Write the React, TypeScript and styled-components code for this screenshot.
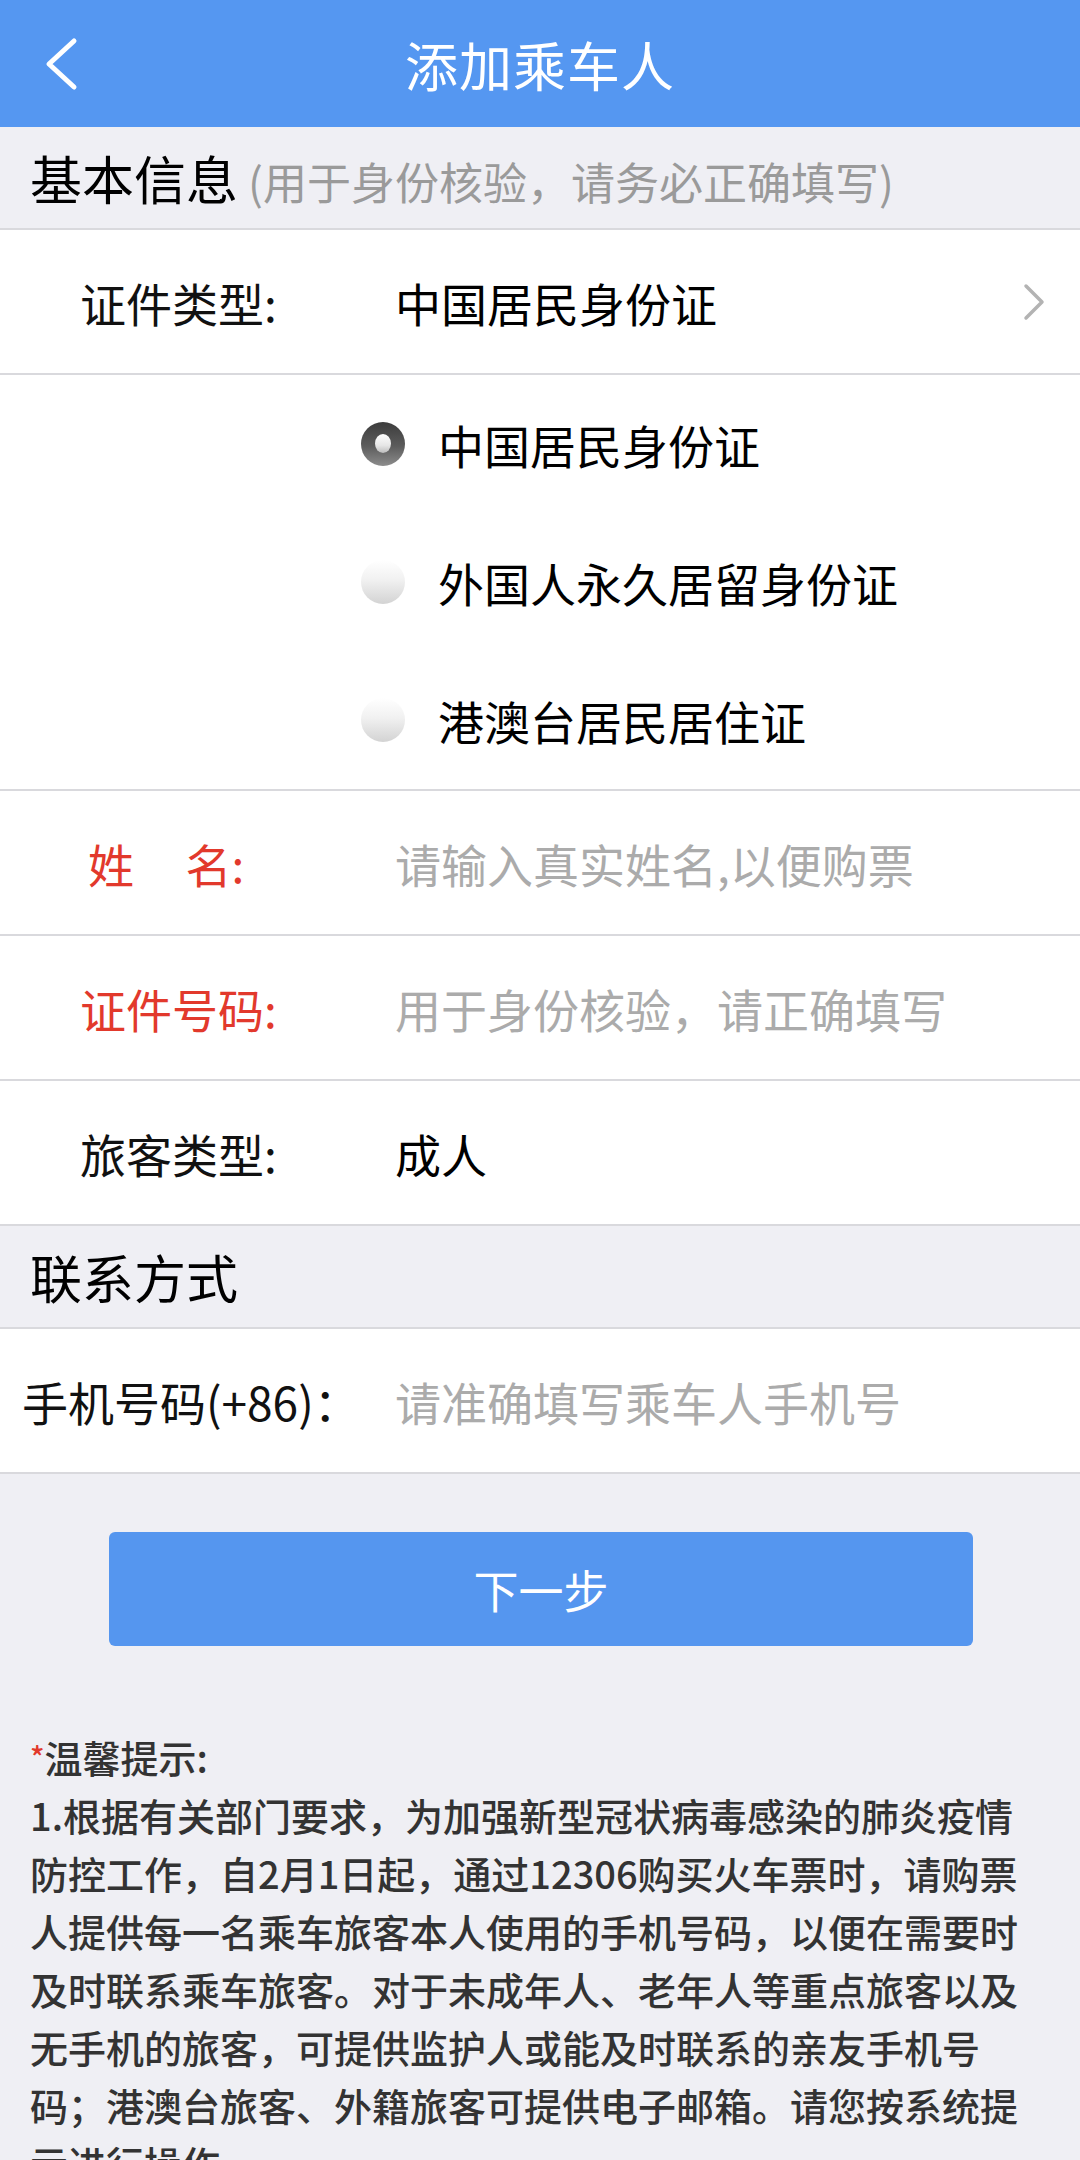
import styled, { createGlobalStyle } from "styled-components";

const GlobalStyle = createGlobalStyle`
  html, body {
    margin: 0;
    padding: 0;
    background: #efeff4;
  }
  body {
    font-family: "Noto Sans CJK SC", "Noto Sans", sans-serif;
  }
  * {
    box-sizing: border-box;
  }
`;

const Page = styled.div`
  width: 1080px;
  min-height: 2160px;
  background: #efeff4;
  color: #000;
`;

const NavBar = styled.header`
  display: grid;
  grid-template-columns: 160px 1fr 160px;
  align-items: center;
  height: 127px;
  background: #5597f1;
`;

const BackButton = styled.button`
  display: flex;
  align-items: center;
  height: 100%;
  padding: 0 0 0 42px;
  border: none;
  background: transparent;
  cursor: pointer;
`;

const Title = styled.h1`
  margin: 0;
  text-align: center;
  font-size: 53px;
  font-weight: 400;
  color: #fff;
  letter-spacing: 1px;
`;

const SectionTitle = styled.div`
  height: 103px;
  padding-left: 30px;
  line-height: 101px;
  font-size: 52px;
  color: #000;
  border-bottom: 2px solid #d9d9dd;
  white-space: nowrap;
`;

const SectionHint = styled.span`
  margin-left: 10px;
  font-size: 44px;
  color: #9a9a9a;
`;

const Row = styled.div`
  display: flex;
  align-items: center;
  height: 145px;
  padding-right: 34px;
  background: #fff;
  border-bottom: 2px solid #d9d9dd;
  font-size: 46px;
`;

const Label = styled.span<{ $inset?: number; $required?: boolean }>`
  flex: none;
  width: 395px;
  padding-left: ${(p) => p.$inset ?? 80}px;
  color: ${(p) => (p.$required ? "#e2392c" : "#111")};
  white-space: pre;
`;

const Value = styled.span`
  flex: 1;
  color: #000;
`;

const Input = styled.input`
  flex: 1;
  min-width: 0;
  padding: 0;
  border: none;
  outline: none;
  background: transparent;
  font: inherit;
  color: #000;

  &::placeholder {
    color: #ababab;
  }
`;

const RadioGroup = styled.div`
  display: flex;
  flex-direction: column;
  background: #fff;
  border-bottom: 2px solid #d9d9dd;
`;

const RadioOption = styled.label`
  display: flex;
  align-items: center;
  gap: 33px;
  height: 138px;
  padding-left: 361px;
  font-size: 46px;
  color: #000;
  cursor: pointer;
`;

const RadioDot = styled.span<{ $checked?: boolean }>`
  position: relative;
  flex: none;
  width: 44px;
  height: 44px;
  border-radius: 50%;
  background: ${(p) =>
    p.$checked
      ? "linear-gradient(180deg, #3c3c3c 0%, #5c5c5c 55%, #8c8c8c 100%)"
      : "linear-gradient(180deg, #ffffff 0%, #f1f1f1 45%, #d3d3d3 100%)"};

  &::after {
    content: "";
    display: ${(p) => (p.$checked ? "block" : "none")};
    position: absolute;
    left: 14px;
    top: 12px;
    width: 16px;
    height: 19px;
    border-radius: 50%;
    background: linear-gradient(180deg, #ffffff 0%, #e6e6e6 60%, #bdbdbd 100%);
  }
`;

const NextButton = styled.button`
  display: block;
  width: 864px;
  height: 114px;
  margin: 58px auto 0 109px;
  border: none;
  border-radius: 6px;
  background: #5596ef;
  color: #fff;
  font-family: inherit;
  font-size: 45px;
  cursor: pointer;
`;

const Tips = styled.div`
  padding: 81px 40px 0 30px;
  font-size: 38px;
  line-height: 58px;
  font-weight: 500;
  color: #333;
`;

const Star = styled.span`
  color: #e2392c;
  font-size: 30px;
  vertical-align: 4px;
`;

const Chevron = () => (
  <svg width="24" height="38" viewBox="0 0 24 38">
    <polyline
      points="4,3 20,19 4,35"
      fill="none"
      stroke="#b3b3b3"
      strokeWidth="3.5"
      strokeLinecap="round"
      strokeLinejoin="round"
    />
  </svg>
);

const BackIcon = () => (
  <svg width="36" height="54" viewBox="0 0 36 54">
    <polyline
      points="32,4 7,27 32,50"
      fill="none"
      stroke="#fff"
      strokeWidth="5"
      strokeLinecap="round"
      strokeLinejoin="round"
    />
  </svg>
);

const idTypes = ["中国居民身份证", "外国人永久居留身份证", "港澳台居民居住证"];

export default function App() {
  return (
    <Page>
      <GlobalStyle />
      <NavBar>
        <BackButton aria-label="返回">
          <BackIcon />
        </BackButton>
        <Title>添加乘车人</Title>
        <span />
      </NavBar>

      <SectionTitle>
        基本信息<SectionHint>(用于身份核验，请务必正确填写)</SectionHint>
      </SectionTitle>

      <Row>
        <Label>证件类型:</Label>
        <Value>中国居民身份证</Value>
        <Chevron />
      </Row>

      <RadioGroup>
        {idTypes.map((t, i) => (
          <RadioOption key={t}>
            <RadioDot $checked={i === 0} />
            {t}
          </RadioOption>
        ))}
      </RadioGroup>

      <Row>
        <Label $inset={88} $required>{"姓     名:"}</Label>
        <Input placeholder="请输入真实姓名,以便购票" />
      </Row>
      <Row>
        <Label $required>证件号码:</Label>
        <Input placeholder="用于身份核验，请正确填写" />
      </Row>
      <Row>
        <Label>旅客类型:</Label>
        <Value>成人</Value>
      </Row>

      <SectionTitle>联系方式</SectionTitle>

      <Row>
        <Label $inset={22}>手机号码(+86)：</Label>
        <Input placeholder="请准确填写乘车人手机号" />
      </Row>

      <NextButton>下一步</NextButton>

      <Tips>
        <Star>*</Star>温馨提示:
        <br />
        1.根据有关部门要求，为加强新型冠状病毒感染的肺炎疫情防控工作，自2月1日起，通过12306购买火车票时，请购票人提供每一名乘车旅客本人使用的手机号码，以便在需要时及时联系乘车旅客。对于未成年人、老年人等重点旅客以及无手机的旅客，可提供监护人或能及时联系的亲友手机号码；港澳台旅客、外籍旅客可提供电子邮箱。请您按系统提示进行操作。
      </Tips>
    </Page>
  );
}
